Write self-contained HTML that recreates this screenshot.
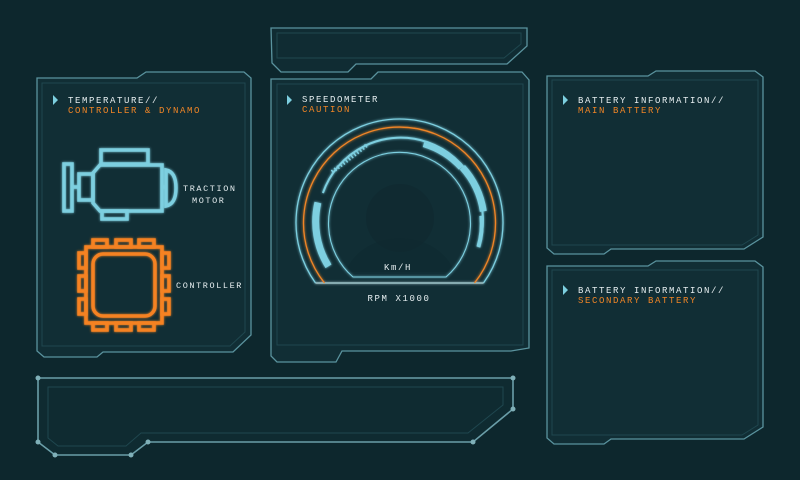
<!DOCTYPE html>
<html><head><meta charset="utf-8"><style>
html,body{margin:0;padding:0;background:#0d272d;width:800px;height:480px;overflow:hidden}
svg{display:block}
text{font-family:"Liberation Mono",monospace;font-size:9px;letter-spacing:1.6px}
.w{fill:#e6eef0}.o{fill:#f08526}
.fr{fill:#112e35;stroke:#5a939e;stroke-width:1.3}
.in{fill:none;stroke:#1f474f;stroke-width:1}
</style></head><body>
<svg width="800" height="480" viewBox="0 0 800 480" xmlns="http://www.w3.org/2000/svg">
<defs><filter id="g" x="-20%" y="-20%" width="140%" height="140%"><feGaussianBlur stdDeviation="1.2" result="b"/><feMerge><feMergeNode in="b"/><feMergeNode in="SourceGraphic"/></feMerge></filter></defs>

<!-- left panel -->
<path class="fr" d="M37,78 L137,78 L146,72 L244,72 L251,78 L251,335 L233,352 L103,352 L97,357 L44,357 L37,351 Z"/>
<path class="in" d="M42,83 L245,83 L245,332 L230,346 L42,346 Z"/>
<!-- speed top small -->
<path class="fr" style="fill:#102c33" d="M271,28 L527,28 L527,46 L507,64 L356,64 L348,72 L281,72 L272,63 Z"/>
<path class="in" d="M277,33 L521,33 L521,44 L504,58 L277,58 Z"/>
<!-- speed panel -->
<path class="fr" d="M271,79 L371,79 L378,72 L522,72 L529,80 L529,348 L511,351 L342,351 L336,362 L277,362 L271,356 Z"/>
<path class="in" d="M277,84 L523,84 L523,345 L277,345 Z"/>
<!-- right panels -->
<path class="fr" d="M547,76 L648,76 L656,71 L755,71 L763,77 L763,237 L744,249 L611,249 L604,254 L554,254 L547,248 Z"/>
<path class="in" d="M552,80 L758,80 L758,235 L742,245 L552,245 Z"/>
<path class="fr" d="M547,266 L648,266 L656,261 L755,261 L763,267 L763,427 L744,439 L611,439 L604,444 L554,444 L547,438 Z"/>
<path class="in" d="M552,270 L758,270 L758,425 L742,435 L552,435 Z"/>
<!-- bottom frame -->
<path fill="#0f2b31" stroke="#6a9ea8" stroke-width="1.6" d="M38,378 L513,378 L513,409 L473,442 L148,442 L131,455 L55,455 L38,442 Z"/>
<path class="in" d="M48,387 L503,387 L503,405 L468,433 L141,433 L126,446 L58,446 L48,438 Z"/>
<g fill="#7fb0b8"><circle cx="38" cy="378" r="2.5"/><circle cx="513" cy="378" r="2.5"/><circle cx="513" cy="409" r="2.5"/><circle cx="473" cy="442" r="2.5"/><circle cx="148" cy="442" r="2.5"/><circle cx="131" cy="455" r="2.5"/><circle cx="55" cy="455" r="2.5"/><circle cx="38" cy="442" r="2.5"/></g>

<!-- headers -->
<g fill="#7dcfe0"><path d="M53,95 L58,100 L53,105 Z"/><path d="M287,95 L292,100 L287,105 Z"/><path d="M563,95 L568,100 L563,105 Z"/><path d="M563,285 L568,290 L563,295 Z"/></g>
<text x="68" y="103" class="w">TEMPERATURE//</text>
<text x="68" y="113" class="o">CONTROLLER &amp; DYNAMO</text>
<text x="302" y="102" class="w">SPEEDOMETER</text>
<text x="302" y="112" class="o">CAUTION</text>
<text x="578" y="103" class="w">BATTERY INFORMATION//</text>
<text x="578" y="113" class="o">MAIN BATTERY</text>
<text x="578" y="293" class="w">BATTERY INFORMATION//</text>
<text x="578" y="303" class="o">SECONDARY BATTERY</text>

<!-- engine -->
<g fill="none" stroke="#7dcfe0" stroke-width="3.5" stroke-linejoin="miter" filter="url(#g)">
<rect x="64" y="164" width="8" height="47"/>
<path d="M72,187 L78,187"/>
<rect x="79" y="174" width="14" height="26"/>
<rect x="101" y="150" width="47" height="14"/>
<path d="M100,165 L162,165 L162,211 L100,211 L93,203 L93,173 Z"/>
<rect x="102" y="211" width="25" height="8"/>
<path d="M162,187 L166,187"/>
<path d="M166,170 Q176,172 176,188 Q176,204 166,206 Z"/>
</g>
<text x="183" y="191" class="w" style="font-size:8.5px">TRACTION</text>
<text x="192" y="203" class="w" style="font-size:8.5px">MOTOR</text>

<!-- chip -->
<g fill="none" stroke="#f58220" stroke-width="3.5" filter="url(#g)">
<rect x="86" y="247" width="76" height="76"/>
<rect x="93" y="254" width="62" height="62" rx="10"/>
<rect x="93" y="240" width="14" height="7"/><rect x="116" y="240" width="15" height="7"/><rect x="139" y="240" width="15" height="7"/>
<rect x="93" y="323" width="14" height="7"/><rect x="116" y="323" width="15" height="7"/><rect x="139" y="323" width="15" height="7"/>
<rect x="79" y="253" width="7" height="15"/><rect x="79" y="276" width="7" height="15"/><rect x="79" y="299" width="7" height="15"/>
<rect x="162" y="253" width="7" height="15"/><rect x="162" y="276" width="7" height="15"/><rect x="162" y="299" width="7" height="15"/>
</g>
<text x="176" y="288" class="w" style="font-size:8.5px">CONTROLLER</text>

<!-- gauge -->
<circle cx="400" cy="218" r="34" fill="#0f2a30" opacity="0.7"/>
<path d="M345,272 Q360,240 400,238 Q440,240 455,272 Z" fill="#0f2a30" opacity="0.6"/>
<g fill="none" filter="url(#g)">
<path d="M315.5,283 A103.5,103.5 0 1 1 483.5,283" stroke="#7dcfe0" stroke-width="1.3"/>
<path d="M315.5,283 L483.5,283" stroke="#9cc2c6" stroke-width="1.5"/>
<path d="M324.5,283 A96,96 0 1 1 474.5,283" stroke="#f08526" stroke-width="1.3"/>
<path d="M353,277 A71,71 0 1 1 446,277 Z" stroke="#7dcfe0" stroke-width="1.1"/>
<path d="M322.9,193.0 A82,82 0 1 1 478.4,247.0" stroke="#7dcfe0" stroke-width="2"/>
<path d="M317.9,202.6 A84,84 0 0 0 328.5,266.3" stroke="#7dcfe0" stroke-width="7"/>
<path d="M423.5,144.6 A82,82 0 0 1 460.8,168.1" stroke="#7dcfe0" stroke-width="5"/>
<path d="M462.4,167.3 A84,84 0 0 1 483.3,211.3" stroke="#7dcfe0" stroke-width="7"/>
<path d="M481.4,215.8 A82,82 0 0 1 478.4,247.0" stroke="#7dcfe0" stroke-width="4"/>
<path d="M332,172 L367,145" stroke="#7dcfe0" stroke-width="4" stroke-dasharray="1.5 2"/>
</g>
<text x="398" y="270" class="w" text-anchor="middle">Km/H</text>
<text x="399" y="301" class="w" text-anchor="middle">RPM X1000</text>
</svg>
</body></html>
